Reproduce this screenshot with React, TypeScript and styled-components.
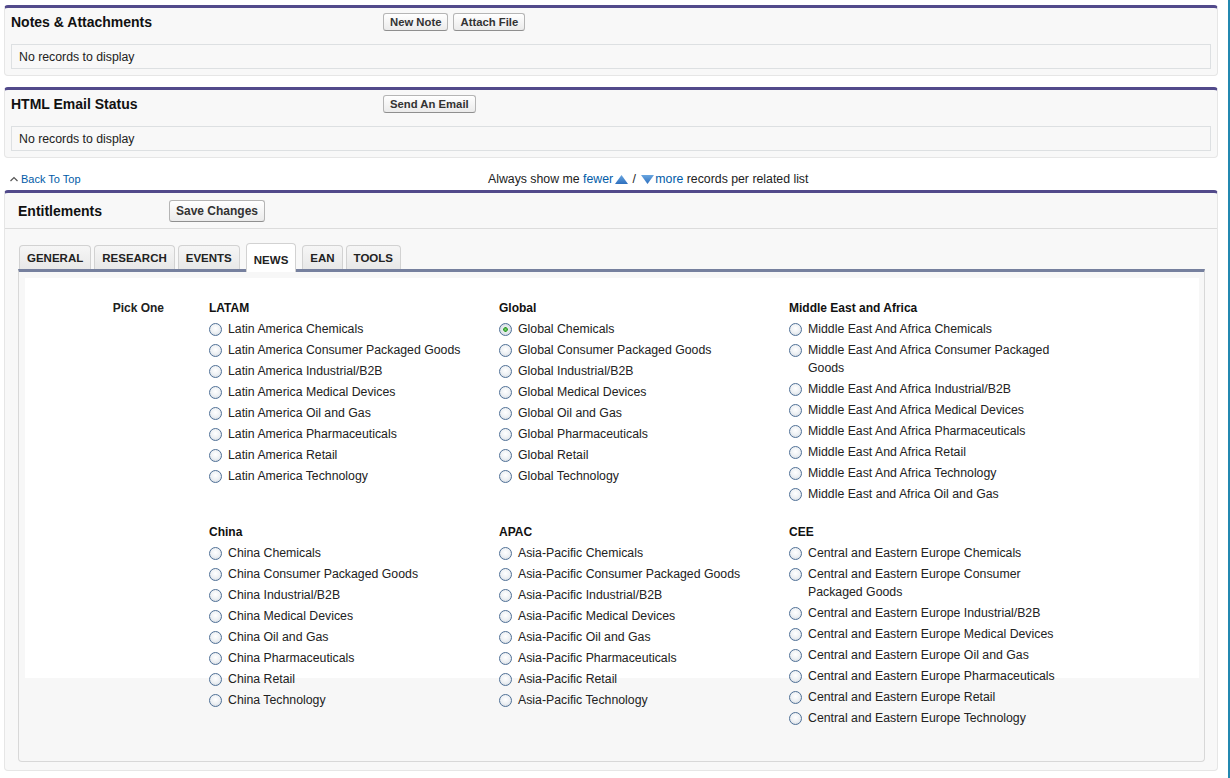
import React, { useState } from "react";
import styled, { createGlobalStyle } from "styled-components";

const GlobalStyle = createGlobalStyle`
  html, body {
    margin: 0;
    padding: 0;
    background: #fff;
  }
  body {
    font-family: "Liberation Sans", Arial, sans-serif;
    font-size: 12.3px;
    color: #222;
  }
`;

type Group = { title: string; items: string[] };

const rows: Group[][] = [
  [
    {
      title: "LATAM",
      items: [
        "Latin America Chemicals",
        "Latin America Consumer Packaged Goods",
        "Latin America Industrial/B2B",
        "Latin America Medical Devices",
        "Latin America Oil and Gas",
        "Latin America Pharmaceuticals",
        "Latin America Retail",
        "Latin America Technology",
      ],
    },
    {
      title: "Global",
      items: [
        "Global Chemicals",
        "Global Consumer Packaged Goods",
        "Global Industrial/B2B",
        "Global Medical Devices",
        "Global Oil and Gas",
        "Global Pharmaceuticals",
        "Global Retail",
        "Global Technology",
      ],
    },
    {
      title: "Middle East and Africa",
      items: [
        "Middle East And Africa Chemicals",
        "Middle East And Africa Consumer Packaged Goods",
        "Middle East And Africa Industrial/B2B",
        "Middle East And Africa Medical Devices",
        "Middle East And Africa Pharmaceuticals",
        "Middle East And Africa Retail",
        "Middle East And Africa Technology",
        "Middle East and Africa Oil and Gas",
      ],
    },
  ],
  [
    {
      title: "China",
      items: [
        "China Chemicals",
        "China Consumer Packaged Goods",
        "China Industrial/B2B",
        "China Medical Devices",
        "China Oil and Gas",
        "China Pharmaceuticals",
        "China Retail",
        "China Technology",
      ],
    },
    {
      title: "APAC",
      items: [
        "Asia-Pacific Chemicals",
        "Asia-Pacific Consumer Packaged Goods",
        "Asia-Pacific Industrial/B2B",
        "Asia-Pacific Medical Devices",
        "Asia-Pacific Oil and Gas",
        "Asia-Pacific Pharmaceuticals",
        "Asia-Pacific Retail",
        "Asia-Pacific Technology",
      ],
    },
    {
      title: "CEE",
      items: [
        "Central and Eastern Europe Chemicals",
        "Central and Eastern Europe Consumer Packaged Goods",
        "Central and Eastern Europe Industrial/B2B",
        "Central and Eastern Europe Medical Devices",
        "Central and Eastern Europe Oil and Gas",
        "Central and Eastern Europe Pharmaceuticals",
        "Central and Eastern Europe Retail",
        "Central and Eastern Europe Technology",
      ],
    },
  ],
];

const tabs = ["GENERAL", "RESEARCH", "EVENTS", "NEWS", "EAN", "TOOLS"];

function RelatedList(props: { title: string; buttons: string[] }) {
  return (
    <Panel>
      <ListHeader>
        <ListTitle>{props.title}</ListTitle>
        <ButtonRow>
          {props.buttons.map((b) => (
            <SmallButton key={b}>{b}</SmallButton>
          ))}
        </ButtonRow>
      </ListHeader>
      <EmptyBox>No records to display</EmptyBox>
    </Panel>
  );
}

function App() {
  const [tab, setTab] = useState("NEWS");
  const [picked, setPicked] = useState("Global Chemicals");

  return (
    <Page>
      <GlobalStyle />
      <RelatedList title="Notes & Attachments" buttons={["New Note", "Attach File"]} />
      <RelatedList title="HTML Email Status" buttons={["Send An Email"]} />

      <FooterRow>
        <Link href="#">
          <svg width="8" height="6" viewBox="0 0 8 6" style={{ marginRight: 3 }}>
            <path d="M0.5 5 L4 1.5 L7.5 5" fill="none" stroke="#555" strokeWidth="1.2" />
          </svg>
          Back To Top
        </Link>
        <ShowMore>
          Always show me <Link href="#">fewer</Link>
          <Triangle width="13" height="9" viewBox="0 0 13 9">
            <defs>
              <linearGradient id="tu" x1="0" y1="0" x2="0" y2="1">
                <stop offset="0" stopColor="#6aa6e0" />
                <stop offset="1" stopColor="#2d6fbe" />
              </linearGradient>
            </defs>
            <path d="M6.5 0 L13 9 L0 9 Z" fill="url(#tu)" />
          </Triangle>
          {" / "}
          <Triangle width="13" height="9" viewBox="0 0 13 9">
            <defs>
              <linearGradient id="td" x1="0" y1="0" x2="0" y2="1">
                <stop offset="0" stopColor="#6aa6e0" />
                <stop offset="1" stopColor="#2d6fbe" />
              </linearGradient>
            </defs>
            <path d="M0 0 L13 0 L6.5 9 Z" fill="url(#td)" />
          </Triangle>
          <Link href="#">more</Link> records per related list
        </ShowMore>
      </FooterRow>

      <Panel $last>
        <EntHeader>
          <EntTitle>Entitlements</EntTitle>
          <SaveButton>Save Changes</SaveButton>
        </EntHeader>
        <EntBody>
          <TabBar>
            {tabs.map((t) => (
              <Tab key={t} $active={t === tab} onClick={() => setTab(t)}>
                {t}
              </Tab>
            ))}
          </TabBar>
          <TabPanel>
            <WhiteArea>
              <PickGrid>
                {rows.map((row, ri) => (
                  <React.Fragment key={ri}>
                    <PickLabel>{ri === 0 ? "Pick One" : ""}</PickLabel>
                    {row.map((g) => (
                      <GroupCol key={g.title}>
                        <GroupTitle>{g.title}</GroupTitle>
                        {g.items.map((it) => (
                          <Option key={it} onClick={() => setPicked(it)}>
                            <Radio $checked={picked === it} />
                            <OptionText>{it}</OptionText>
                          </Option>
                        ))}
                      </GroupCol>
                    ))}
                  </React.Fragment>
                ))}
              </PickGrid>
            </WhiteArea>
          </TabPanel>
        </EntBody>
      </Panel>
    </Page>
  );
}

export default App;

const Page = styled.div`
  box-sizing: border-box;
  width: 1230px;
  min-height: 778px;
  padding: 5px 10px 0 4px;
  border-right: 2px solid #2388b0;
`;

const Panel = styled.div<{ $last?: boolean }>`
  background: #f8f8f8;
  border: 1px solid #e6e6e6;
  border-top: 3px solid #524a8b;
  border-radius: 4px;
  padding: ${(p) => (p.$last ? "0" : "0 6px 6px 6px")};
  margin-bottom: ${(p) => (p.$last ? "0" : "11px")};
`;

const ListHeader = styled.div`
  display: flex;
  align-items: center;
  height: 28px;
`;

const ListTitle = styled.h3`
  margin: 0;
  width: 372px;
  font-size: 14px;
  font-weight: bold;
  color: #111;
`;

const ButtonRow = styled.div`
  display: flex;
  gap: 5px;
`;

const SmallButton = styled.button`
  font-family: "Liberation Sans", Arial, sans-serif;
  font-size: 11.3px;
  font-weight: bold;
  color: #333;
  height: 18px;
  padding: 0 6px;
  border: 1px solid #b5b5b5;
  border-bottom-color: #8f8f8f;
  border-radius: 3px;
  background: linear-gradient(#ffffff, #ebebeb);
  cursor: pointer;
`;

const EmptyBox = styled.div`
  margin-top: 8px;
  height: 25px;
  box-sizing: border-box;
  display: flex;
  align-items: center;
  padding-left: 7px;
  border: 1px solid #dde0e2;
  background: #f8f8f8;
  color: #222;
`;

const FooterRow = styled.div`
  display: grid;
  grid-template-columns: 478px auto;
  align-items: center;
  height: 14px;
  padding: 3px 0 4px 6px;
  font-size: 12px;
`;

const Link = styled.a`
  color: #015ba7;
  text-decoration: none;
  display: inline-flex;
  align-items: center;
  font-size: 11px;
`;

const ShowMore = styled.div`
  color: #222;
  font-size: 12.3px;
  display: flex;
  align-items: center;
  white-space: pre;

  a {
    font-size: 12.3px;
  }
`;

const Triangle = styled.svg`
  margin: 0 1px 0 2px;
`;

const EntHeader = styled.div`
  display: flex;
  align-items: center;
  height: 36px;
  box-sizing: border-box;
  padding-left: 13px;
  border-bottom: 1px solid #dcdcdc;
`;

const EntTitle = styled.h3`
  margin: 0;
  width: 151px;
  font-size: 14px;
  font-weight: bold;
  color: #111;
`;

const SaveButton = styled.button`
  font-family: "Liberation Sans", Arial, sans-serif;
  font-size: 12px;
  font-weight: bold;
  color: #333;
  height: 22px;
  padding: 0 6px;
  border: 1px solid #b5b5b5;
  border-bottom-color: #8f8f8f;
  border-radius: 3px;
  background: linear-gradient(#ffffff, #ebebeb);
  cursor: pointer;
`;

const EntBody = styled.div`
  padding: 11px 12px 8px 13px;
`;

const TabBar = styled.div`
  display: flex;
  align-items: flex-end;
  gap: 3px;
  padding-left: 1px;
  height: 29px;
`;

const Tab = styled.div<{ $active: boolean }>`
  position: relative;
  z-index: ${(p) => (p.$active ? 2 : 1)};
  box-sizing: border-box;
  height: ${(p) => (p.$active ? "29px" : "24px")};
  margin: ${(p) => (p.$active ? "0 3px -3px 3px" : "0")};
  padding: ${(p) => (p.$active ? "4px 7px 0" : "0 7px")};
  display: flex;
  align-items: center;
  font-size: 11.5px;
  font-weight: bold;
  color: #222;
  border: 1px solid #d2d2d2;
  border-bottom: none;
  border-radius: 4px 4px 0 0;
  background: ${(p) => (p.$active ? "#fff" : "linear-gradient(#f6f6f6, #e8e8e8)")};
  cursor: pointer;
`;

const TabPanel = styled.div`
  box-sizing: border-box;
  height: 493px;
  border: 1px solid #d8d8d8;
  border-top: 3px solid #76809e;
  border-radius: 0 0 4px 4px;
  background: #f7f7f7;
  padding: 6px 5px 0 6px;
`;

const WhiteArea = styled.div`
  height: 400px;
  background: #fff;
  padding-top: 21px;
  box-sizing: border-box;
`;

const PickGrid = styled.div`
  display: grid;
  grid-template-columns: 184px 290px 290px 278px;
  row-gap: 17px;
`;

const PickLabel = styled.div`
  text-align: right;
  padding-right: 45px;
  font-size: 12px;
  font-weight: bold;
  line-height: 18px;
  color: #222;
`;

const GroupCol = styled.div`
  display: flex;
  flex-direction: column;
`;

const GroupTitle = styled.div`
  font-size: 12px;
  font-weight: bold;
  line-height: 18px;
  margin-bottom: 3px;
  color: #111;
`;

const Option = styled.label`
  display: flex;
  align-items: flex-start;
  gap: 6px;
  margin-bottom: 3px;
  cursor: pointer;
`;

const Radio = styled.span<{ $checked: boolean }>`
  flex: none;
  box-sizing: border-box;
  width: 13px;
  height: 13px;
  margin: 2.5px 0 0 0;
  border-radius: 50%;
  border: 1px solid #4f7096;
  background: ${(p) =>
    p.$checked
      ? "radial-gradient(circle, #7fd36f 0, #2f9b2a 2px, #e9edf1 2.6px, #cdd5dd 100%)"
      : "radial-gradient(circle at 50% 40%, #ffffff 0, #eef1f4 50%, #cbd3dc 100%)"};
`;

const OptionText = styled.span`
  line-height: 18px;
  font-size: 12.3px;
  color: #222;
`;
